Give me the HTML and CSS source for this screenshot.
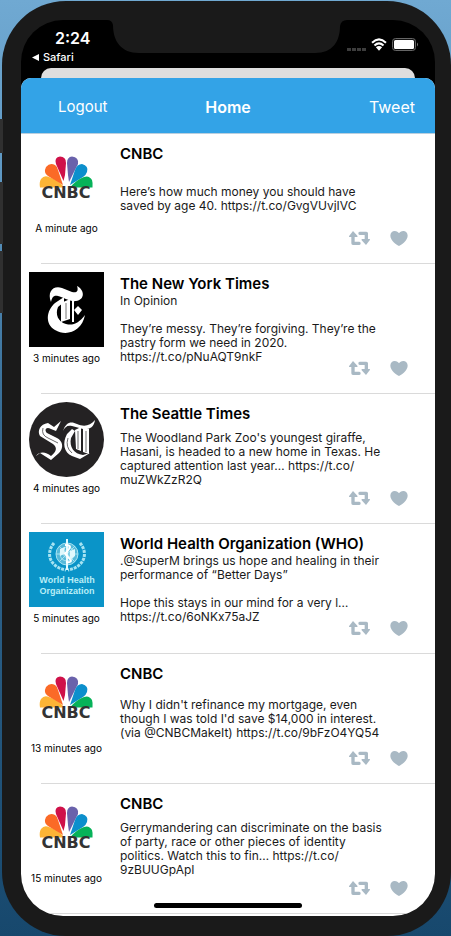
FILE: index.html
```html
<!DOCTYPE html>
<html lang="en">
<head>
<meta charset="utf-8">
<meta name="viewport" content="width=device-width, initial-scale=1">
<title>Home</title>
<link rel="stylesheet" href="styles.css">
</head>
<body>
<svg class="sprite" aria-hidden="true">
  <symbol id="retweet" viewBox="0 0 63 42">
    <path d="M12 0 25 14Q27 18 23 18H17V32H31Q35 32 35 37T31 42H12Q7 42 7 37V18H2Q-2 18 1 14ZM51 42 38 28Q36 24 40 24H47V12H32Q28 12 28 7T32 2H52Q57 2 57 7V24H61Q65 24 62 28Z"/>
  </symbol>
  <symbol id="heart" viewBox="0 0 52 45">
    <path d="M26 45C20 42 0 29 0 14 0 5 6 0 13 0 19 0 24 3 26 7 28 3 33 0 39 0 46 0 52 5 52 14 52 29 32 42 26 45Z"/>
  </symbol>
  <symbol id="peacock" viewBox="0 0 75 75">
    <path fill="#fdb436" d="M35 45.500H11Q10 40 12 37 15 33 20 35Q29 38 35 45Z"/>
    <path fill="#fb6a27" d="M34 43 19 34Q14 31 17 25 21 20 26 23 28 24 29 28Z"/>
    <path fill="#cf1149" d="M34.500 39 27 22Q25 15 31 14.500 37 14.500 37 21L36 33Z"/>
    <path fill="#6a62ab" d="M40 40 39 33 38 21Q38 15 43 14.500 50 15 49 22Z"/>
    <path fill="#0c8fcc" d="M41 43 46 28Q48 22 53 22 60 24 58 30 57 33 54 35Z"/>
    <path fill="#07b259" d="M41 45.500Q47 38 55 35 60 33 63 38 64 41 63.500 45.500Z"/>
  </symbol>
</svg>

<div class="phone">
  <span class="side-key mute"></span>
  <span class="side-key volume-up"></span>
  <span class="side-key volume-down"></span>
  <div class="screen">
    <div class="status-bar">
      <div class="status-left">
        <span class="clock">2:24</span>
        <a class="back-app" href="#"><svg class="back-mark" viewBox="0 0 8 8" aria-hidden="true"><path d="M0 4 8 0V8Z"/></svg>Safari</a>
      </div>
      <svg class="notch" viewBox="0 0 240 33" preserveAspectRatio="none" aria-hidden="true"><path d="M0 0Q5 0 6 5C6 21 14 33 32 33H208C226 33 233 21 233 6Q234 0 240 0Z"/></svg>
      <div class="status-right">
        <svg class="signal" viewBox="0 0 19 3" aria-hidden="true"><path d="M0 0H4V3H0ZM5 0H9V3H5ZM10 0H14V3H10ZM15 0H19V3H15Z"/></svg>
        <svg class="wifi" viewBox="0 0 46 36" aria-hidden="true"><path d="M3 13Q23-6 43 13M10 21Q23 9 36 21" fill="none" stroke="#fff" stroke-width="6"/><path d="M14 26Q23 19 32 26L23 36Z" fill="#fff"/></svg>
        <svg class="battery" viewBox="0 0 27 13" aria-hidden="true"><rect x="0.500" y="0.500" width="23" height="12" rx="3" fill="#111" stroke="#666"/><rect x="2" y="2" width="20" height="9" rx="1.500" fill="#fff"/><path d="M25 4.500Q27 6.500 25 8.500Z" fill="#777"/></svg>
      </div>
    </div>
    <div class="card-behind"></div>
    <main class="sheet">
      <header class="nav">
        <button class="nav-button logout" type="button">Logout</button>
        <h1 class="nav-title">Home</h1>
        <button class="nav-button tweet-button" type="button">Tweet</button>
      </header>
      <ul class="feed">
        <li class="tweet">
          <div class="source"><svg class="avatar" viewBox="0 0 75 75" role="img" aria-label="CNBC"><use href="#peacock"/><text x="37" y="56" text-anchor="middle" class="cnbc-word">CNBC</text></svg><span class="time">A minute ago</span></div>
          <div class="content">
            <h2 class="name">CNBC</h2>
            <div class="body"><p>Here’s how much money you should have<br>saved by age 40. <a href="#">https://t.co/GvgVUvjIVC</a></p></div>
            <div class="actions"><button type="button" aria-label="Retweet"><svg class="retweet"><use href="#retweet"/></svg></button><button type="button" aria-label="Like"><svg class="heart"><use href="#heart"/></svg></button></div>
          </div>
        </li>
        <li class="tweet">
          <div class="source">
            <svg class="avatar" viewBox="0 0 75 75" role="img" aria-label="The New York Times">
              <rect width="75" height="75"/>
              <g fill="#fff">
                <path d="M22 30C18 20 24 13 33 16L43 20C47 21 50 20 48 14 56 18 56 28 47 29 41 30 34 25 29 24 24 23 23 26 22 30Z"/>
                <path d="M35 25 26 31C17 39 16 52 26 58 38 65 53 59 56 43 50 51 44 54 37 52 29 50 26 42 29 35L35 30Z"/>
                <path d="M32 31 41 27V47L32 50ZM43 28H45V50H43ZM45 38 49 34 53 38 49 43Z"/>
              </g>
              <path d="M37 31V47" stroke="#777" stroke-width="1"/>
            </svg>
            <span class="time">3 minutes ago</span>
          </div>
          <div class="content">
            <h2 class="name">The New York Times</h2>
            <div class="body"><p>In Opinion<br><br>They’re messy. They’re forgiving. They’re the<br>pastry form we need in 2020.<br><a href="#">https://t.co/pNuAQT9nkF</a></p></div>
            <div class="actions"><button type="button" aria-label="Retweet"><svg class="retweet"><use href="#retweet"/></svg></button><button type="button" aria-label="Like"><svg class="heart"><use href="#heart"/></svg></button></div>
          </div>
        </li>
        <li class="tweet">
          <div class="source">
            <svg class="avatar" viewBox="0 0 75 75" role="img" aria-label="The Seattle Times">
              <circle cx="37.500" cy="37.500" r="37.500" fill="#242223"/>
              <g fill="#fff">
                <path d="M32 19 25 25 19 21C11 22 8 29 11 34L24 42C29 46 27 50 22 54 17 50 11 49 7 54L11 51 22 58 30 51C35 46 34 39 28 36L18 31C15 28 17 24 22 27L27 29Z"/>
                <path d="M34 29C37 20 42 19 48 22 55 25 61 24 66 18 65 26 59 28 54 27L43 24C38 23 36 25 34 29Z"/>
                <path d="M43 27 38 32C33 41 35 51 43 54L51 57 61 51 54 53C45 52 40 45 42 36L46 29Z"/>
                <path d="M46 28 52 25V49L47 47ZM54 27H60V52L54 50Z"/>
              </g>
              <path d="M14 26Q12 33 19 36L29 41M49 29V47M57 29V50M39 36Q36 45 43 51" fill="none" stroke="#6b6b6b" stroke-width="1"/>
            </svg>
            <span class="time">4 minutes ago</span>
          </div>
          <div class="content">
            <h2 class="name">The Seattle Times</h2>
            <div class="body"><p>The Woodland Park Zoo's youngest giraffe,<br>Hasani, is headed to a new home in Texas. He<br>captured attention last year… <a href="#">https://t.co/<br>muZWkZzR2Q</a></p></div>
            <div class="actions"><button type="button" aria-label="Retweet"><svg class="retweet"><use href="#retweet"/></svg></button><button type="button" aria-label="Like"><svg class="heart"><use href="#heart"/></svg></button></div>
          </div>
        </li>
        <li class="tweet">
          <div class="source">
            <svg class="avatar" viewBox="0 0 75 75" role="img" aria-label="World Health Organization">
              <rect width="75" height="75" fill="#0a94c8"/>
              <g fill="none" stroke="#a6e3f2">
                <circle cx="38" cy="22" r="11" fill="#56b9d9"/>
                <circle cx="38" cy="22" r="7"/><circle cx="38" cy="22" r="3.500"/>
                <path d="M27 22H49M30 14 46 30M46 14 30 30"/>
                <path d="M25 11C16 22 21 35 37 38M51 11C60 22 55 35 39 38" stroke-width="3" stroke-dasharray="3 1"/>
                <path d="M38 7V38" stroke="#e4fbff" stroke-width="2"/>
                <path d="M36 13Q43 13 40 17T36 21 40 26 37 30" stroke="#fff" stroke-width="2"/>
              </g>
              <path fill="#dff8fc" d="M31 17 36 15 35 22 31 24ZM41 19 46 17 46 24 41 28Z"/>
              <text class="who-word" x="38" y="51" text-anchor="middle">World Health</text>
              <text class="who-word" x="38" y="62" text-anchor="middle">Organization</text>
            </svg>
            <span class="time">5 minutes ago</span>
          </div>
          <div class="content">
            <h2 class="name">World Health Organization (WHO)</h2>
            <div class="body"><p>.@SuperM brings us hope and healing in their<br>performance of “Better Days”<br><br>Hope this stays in our mind for a very l…<br><a href="#">https://t.co/6oNKx75aJZ</a></p></div>
            <div class="actions"><button type="button" aria-label="Retweet"><svg class="retweet"><use href="#retweet"/></svg></button><button type="button" aria-label="Like"><svg class="heart"><use href="#heart"/></svg></button></div>
          </div>
        </li>
        <li class="tweet">
          <div class="source"><svg class="avatar" viewBox="0 0 75 75" role="img" aria-label="CNBC"><use href="#peacock"/><text x="37" y="56" text-anchor="middle" class="cnbc-word">CNBC</text></svg><span class="time">13 minutes ago</span></div>
          <div class="content">
            <h2 class="name">CNBC</h2>
            <div class="body"><p>Why I didn't refinance my mortgage, even<br>though I was told I'd save $14,000 in interest.<br>(via @CNBCMakeIt) <a href="#">https://t.co/9bFzO4YQ54</a></p></div>
            <div class="actions"><button type="button" aria-label="Retweet"><svg class="retweet"><use href="#retweet"/></svg></button><button type="button" aria-label="Like"><svg class="heart"><use href="#heart"/></svg></button></div>
          </div>
        </li>
        <li class="tweet">
          <div class="source"><svg class="avatar" viewBox="0 0 75 75" role="img" aria-label="CNBC"><use href="#peacock"/><text x="37" y="56" text-anchor="middle" class="cnbc-word">CNBC</text></svg><span class="time">15 minutes ago</span></div>
          <div class="content">
            <h2 class="name">CNBC</h2>
            <div class="body"><p>Gerrymandering can discriminate on the basis<br>of party, race or other pieces of identity<br>politics. Watch this to fin… <a href="#">https://t.co/<br>9zBUUGpApI</a></p></div>
            <div class="actions"><button type="button" aria-label="Retweet"><svg class="retweet"><use href="#retweet"/></svg></button><button type="button" aria-label="Like"><svg class="heart"><use href="#heart"/></svg></button></div>
          </div>
        </li>
      </ul>
    </main>
    <span class="home-indicator"></span>
  </div>
</div>
</body>
</html>
```
FILE: styles.css
```css
* {
  box-sizing: border-box;
}

body {
  margin: 0;
  padding: 1px 0 0 2px;
  background: linear-gradient(#70a9d2 0, #5d97c2 20%, #356b94 45%, #17486d 100%);
  font-family: Inter, "Liberation Sans", sans-serif;
  color: #000;
}

h1,
h2,
p,
ul {
  margin: 0;
  padding: 0;
}

button {
  padding: 0;
  border: 0;
  background: none;
  font: inherit;
}

a {
  color: inherit;
  text-decoration: none;
}

svg {
  display: block;
}

.sprite {
  position: absolute;
  width: 0;
  height: 0;
}

.phone {
  position: relative;
  padding: 19px 16px 20px 19px;
  border-radius: 64px;
  background: #1a1a1a;
}

.side-key {
  position: absolute;
  left: -2px;
  width: 3px;
  height: 62px;
  background: #303030;
}

.mute {
  top: 118px;
  height: 34px;
}

.volume-up {
  top: 181px;
}

.volume-down {
  top: 250px;
}

.screen {
  position: relative;
  overflow: hidden;
  padding-bottom: 2px;
  border-radius: 42px;
  background: #000;
}

.status-bar {
  display: flex;
  align-items: flex-start;
  height: 48px;
  color: #fff;
}

.status-left {
  display: flex;
  flex-direction: column;
  width: 86px;
  padding: 8px 0 0 11px;
}

.clock {
  padding-left: 23px;
  font-size: 16px;
  font-weight: 600;
  line-height: 20px;
}

.back-app {
  display: flex;
  align-items: center;
  gap: 4px;
  font-size: 11px;
  font-weight: 500;
  line-height: 18px;
}

.back-mark {
  width: 7px;
  height: 7px;
  fill: #fff;
}

.notch {
  flex: 1;
  min-width: 0;
  height: 33px;
  fill: #1a1a1a;
}

.status-right {
  display: flex;
  align-items: flex-end;
  justify-content: flex-end;
  gap: 5px;
  width: 88px;
  padding: 18px 16px 0 0;
}

.signal {
  width: 19px;
  height: 3px;
  fill: #3d3d3d;
}

.wifi {
  width: 16px;
  height: 13px;
}

.battery {
  width: 27px;
  height: 13px;
}

.card-behind {
  height: 20px;
  margin: 0 20px -10px;
  border-radius: 10px 10px 0 0;
  background: #dedede;
}

.sheet {
  position: relative;
  overflow: hidden;
  margin-bottom: -2px;
  padding-bottom: 2px;
  border-radius: 10px 10px 0 0;
  background: #fff;
}

.nav {
  display: grid;
  grid-template-columns: 1fr auto 1fr;
  align-items: center;
  height: 56px;
  padding: 2px 20px 0 37px;
  border-bottom: 1px solid #b9cfdf;
  background: #33a3e7;
  color: #fff;
}

.nav-button {
  color: #fff;
  font-size: 15px;
  line-height: 20px;
}

.logout {
  justify-self: start;
}

.tweet-button {
  justify-self: end;
  font-size: 16px;
}

.nav-title {
  margin-right: 17px;
  font-size: 16px;
  font-weight: 600;
  line-height: 20px;
}

.feed {
  list-style: none;
}

.tweet {
  display: grid;
  grid-template-columns: 75px 1fr;
  column-gap: 16px;
  padding: 8px 27px 0 8px;
}

.tweet::after {
  content: "";
  grid-column: 1 / -1;
  height: 1px;
  margin: 0 -27px 0 12px;
  background: #dadada;
}

.source {
  height: 121px;
}

.avatar {
  width: 75px;
  height: 75px;
}

.time {
  display: flex;
  justify-content: center;
  padding-top: 4px;
  font-size: 10px;
  line-height: 14px;
  white-space: nowrap;
}

.content {
  padding-top: 2px;
}

.name {
  font-size: 15px;
  font-weight: 600;
  line-height: 20px;
  white-space: nowrap;
}

.body {
  display: flex;
  align-items: center;
  height: 70px;
  font-size: 12px;
  line-height: 14px;
  white-space: nowrap;
  color: #1a1a1a;
}

.actions {
  display: flex;
  align-items: center;
  justify-content: flex-end;
  gap: 20px;
  height: 8px;
}

.actions svg {
  fill: #a9b9c4;
}

.retweet {
  width: 21px;
  height: 14px;
}

.heart {
  width: 18px;
  height: 15px;
}

.cnbc-word {
  font-family: "DejaVu Sans", sans-serif;
  font-size: 16px;
  font-weight: 700;
  fill: #333;
}

.who-word {
  font-family: "Liberation Sans", sans-serif;
  font-size: 9px;
  font-weight: 700;
  fill: #b8eef7;
}

.home-indicator {
  position: absolute;
  bottom: 8px;
  left: 50%;
  width: 148px;
  height: 5px;
  margin-left: -74px;
  border-radius: 3px;
  background: #000;
}
```
